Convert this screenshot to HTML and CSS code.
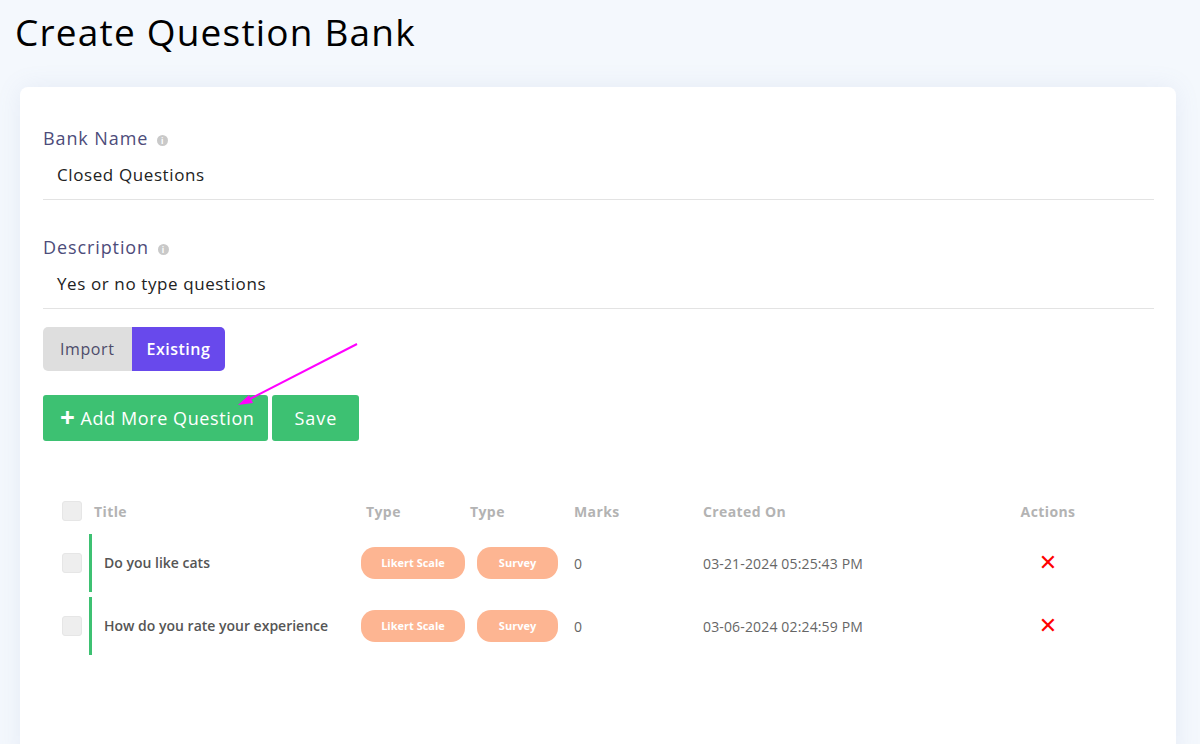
FILE: index.html
```html
<!DOCTYPE html>
<html>
<head>
<meta charset="utf-8">
<title>Create Question Bank</title>
<link rel="stylesheet" href="styles.css">
</head>
<body>
<h1 class="page-title">Create Question Bank</h1>
<div class="card">
  <div class="field">
    <label class="field-label">Bank Name <span class="info">i</span></label>
    <div class="field-value">Closed Questions</div>
  </div>
  <div class="field">
    <label class="field-label">Description <span class="info">i</span></label>
    <div class="field-value">Yes or no type questions</div>
  </div>

  <div class="toggle">
    <div class="toggle-btn">Import</div>
    <div class="toggle-btn active">Existing</div>
  </div>

  <div class="actions">
    <button class="btn add"><span class="plus">+</span>Add More Question</button>
    <button class="btn save">Save</button>
    <svg class="pointer" width="140" height="80" viewBox="0 0 140 80">
      <line x1="135" y1="4" x2="22" y2="62" stroke="#ff00ff" stroke-width="2"/>
      <polygon points="16,65 27,55 31,63" fill="#ff00ff"/>
    </svg>
  </div>

  <div class="table">
    <div class="row head">
      <div class="cell"><span class="check"></span></div>
      <div class="cell title">Title</div>
      <div class="cell type1">Type</div>
      <div class="cell">Type</div>
      <div class="cell">Marks</div>
      <div class="cell">Created On</div>
      <div class="cell center">Actions</div>
    </div>
    <div class="row item">
      <div class="cell"><span class="check"></span></div>
      <div class="cell title">Do you like cats</div>
      <div class="cell"><span class="badge">Likert Scale</span></div>
      <div class="cell"><span class="badge survey">Survey</span></div>
      <div class="cell">0</div>
      <div class="cell">03-21-2024 05:25:43 PM</div>
      <div class="cell center"><span class="del">&#x2715;</span></div>
    </div>
    <div class="row item">
      <div class="cell"><span class="check"></span></div>
      <div class="cell title">How do you rate your experience</div>
      <div class="cell"><span class="badge">Likert Scale</span></div>
      <div class="cell"><span class="badge survey">Survey</span></div>
      <div class="cell">0</div>
      <div class="cell">03-06-2024 02:24:59 PM</div>
      <div class="cell center"><span class="del">&#x2715;</span></div>
    </div>
  </div>
</div>
</body>
</html>
```
FILE: styles.css
```css
body {
	margin:0;
	background:#f4f8fd;
	font-family:"Open Sans", "DejaVu Sans", sans-serif;
	color:#222;
	overflow:hidden;
	height:744px;
}
.page-title {
	font-weight:400;
	font-size:37px;
	margin:0;
	padding:6px 15px 0;
	height:87px;
	box-sizing:border-box;
	color:#000;
	letter-spacing:1.2px;
}
.card {
	background:#fff;
	margin:0 24px 0 20px;
	border-radius:8px;
	padding:38px 22px 0 23px;
	box-shadow:0 0 24px rgba(120,140,190,0.12);
	height:640px;
}
.field {
	border-bottom:1px solid #e3e3e3;
	margin-bottom:18px;
}
.field:first-child {
	margin-bottom:34px;
}
.field-label {
	display:block;
	font-size:18px;
	color:#4d4c7a;
	line-height:26px;
	letter-spacing:0.9px;
}
.info {
	display:inline-block;
	width:11px;
	height:11px;
	border-radius:50%;
	background:#c9c9c9;
	color:#fff;
	font-size:8px;
	line-height:11px;
	text-align:center;
	font-weight:bold;
	vertical-align:middle;
	margin-left:3px;
	letter-spacing:0;
}
.field-value {
	font-size:17px;
	line-height:23px;
	letter-spacing:0.6px;
	padding:12px 14px 13px;
	color:#222;
}
.toggle {
	display:inline-flex;
	border-radius:5px;
	overflow:hidden;
}
.toggle-btn {
	background:#dedede;
	color:#4d4c6a;
	font-size:16px;
	letter-spacing:0.6px;
	height:44px;
	line-height:44px;
	padding:0 17px;
}
.toggle-btn.active {
	background:#6849ec;
	color:#fff;
	font-weight:600;
	padding:0 15px;
	letter-spacing:0.5px;
}
.actions {
	display:flex;
	gap:4px;
	margin-top:24px;
	position:relative;
}
.btn {
	background:#3dc172;
	color:#fff;
	border:0;
	border-radius:3px;
	height:46px;
	font-family:inherit;
	font-size:18px;
	letter-spacing:0.6px;
}
.btn.add {
	padding:0 14px 0 17px;
}
.btn.save {
	padding:0 22px;
	letter-spacing:1px;
}
.plus {
	font-size:26px;
	font-weight:700;
	line-height:0;
	vertical-align:-2px;
	margin-right:5px;
}
.pointer {
	position:absolute;
	left:179px;
	top:-55px;
}
.table {
	margin:55px 0 0 19px;
}
.row {
	display:grid;
	grid-template-columns:27px 272px 109px 104px 129px 280px 130px;
	align-items:center;
	letter-spacing:0.15px;
}
.row.head {
	font-weight:700;
	color:#b3b3b3;
	font-size:14px;
	height:30px;
	margin-bottom:8px;
	letter-spacing:0.4px;
}
.row.head .title, .row.head .type1 {
	padding-left:5px;
}
.row.item {
	height:58px;
	margin-bottom:5px;
	font-size:14px;
	color:#666;
}
.row.item .title {
	border-left:3px solid #3dc172;
	height:58px;
	line-height:58px;
	padding-left:12px;
	font-weight:600;
	color:#555;
	letter-spacing:0;
}
.row.item .cell:nth-child(4) {
	padding-left:7px;
}
.check {
	display:block;
	width:20px;
	height:20px;
	background:#eee;
	border:1px solid #e6e6e6;
	border-radius:3px;
	box-sizing:border-box;
}
.badge {
	display:inline-block;
	background:#fdb592;
	color:#fff;
	font-size:11px;
	font-weight:700;
	height:32px;
	line-height:32px;
	border-radius:14px;
	width:104px;
	text-align:center;
	letter-spacing:0;
}
.badge.survey {
	width:81px;
}
.center {
	text-align:center;
}
.del {
	color:#f00;
	font-size:22px;
	font-weight:700;
	position:relative;
	top:-2px;
}
```
